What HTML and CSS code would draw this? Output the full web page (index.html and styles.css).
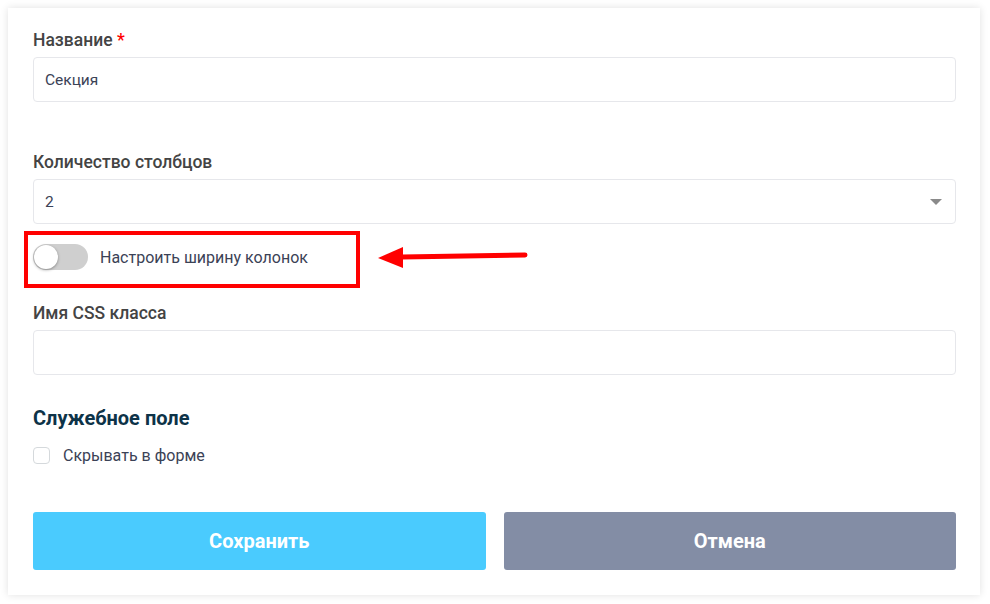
FILE: index.html
```html
<!DOCTYPE html>
<html lang="ru">
<head>
    <meta charset="UTF-8">
    <title>Секция</title>
    <link rel="stylesheet" href="styles.css">
</head>
<body>

<div class="card">
    <form class="section-form">
        <div class="field">
            <label class="field-label" for="name">Название <span class="required">*</span></label>
            <input class="field-input" type="text" id="name" value="Секция">
        </div>

        <div class="field field-spaced">
            <label class="field-label" for="cols">Количество столбцов</label>
            <div class="select-wrap">
                <div class="field-input select-input" id="cols">2</div>
                <span class="caret"></span>
            </div>
        </div>

        <div class="toggle-row">
            <span class="toggle"><span class="knob"></span></span>
            <span class="toggle-text">Настроить ширину колонок</span>
            <!-- annotation -->
            <span class="mark-box"></span>
            <svg class="mark-arrow" width="150" height="24" viewBox="0 0 150 24">
                <path d="M147 9 L24 11" stroke="#ff0000" stroke-width="5" stroke-linecap="round" fill="none"/>
                <polygon points="0,12 25,1 25,22" fill="#ff0000"/>
            </svg>
        </div>

        <div class="field field-css">
            <label class="field-label" for="css">Имя CSS класса</label>
            <input class="field-input" type="text" id="css">
        </div>

        <h3 class="group-title">Служебное поле</h3>
        <label class="check-row">
            <span class="checkbox"></span>
            <span>Скрывать в форме</span>
        </label>

        <div class="actions">
            <button type="button" class="btn btn-save">Сохранить</button>
            <button type="button" class="btn btn-cancel">Отмена</button>
        </div>
    </form>
</div>

</body>
</html>
```

FILE: styles.css
```css
* {
    margin: 0;
    padding: 0;
    box-sizing: border-box;
}

body {
    font-family: Roboto, "Liberation Sans", Arial, sans-serif;
    background: #fff;
    padding: 8px;
}

.card {
    width: 972px;
    background: #fff;
    padding: 22px 24px 25px 25px;
    box-shadow: 0 0 8px rgba(0, 0, 0, 0.12);
}

.field {
    display: flex;
    flex-direction: column;
}

.field-spaced {
    margin-top: 50px;
}

.field-css {
    margin-top: 33px;
}

.field-label {
    font-size: 17.5px;
    line-height: 20px;
    font-weight: 500;
    color: #444;
    margin-bottom: 7px;
}

.required {
    color: #f00;
}

.field-input {
    width: 100%;
    height: 45px;
    border: 1px solid #e6e7eb;
    border-radius: 4px;
    padding: 0 11px;
    font-family: inherit;
    font-size: 15.5px;
    color: #3b4256;
    outline: none;
}

.select-wrap {
    position: relative;
}

.select-input {
    display: flex;
    align-items: center;
}

.caret {
    position: absolute;
    right: 14px;
    top: 20px;
    border-left: 6px solid transparent;
    border-right: 6px solid transparent;
    border-top: 6px solid #8a8a8a;
}

/* toggle */
.toggle-row {
    position: relative;
    display: flex;
    align-items: center;
    gap: 12px;
    height: 26px;
    margin-top: 20px;
}

.toggle {
    position: relative;
    width: 55px;
    height: 26px;
    border-radius: 13px;
    background: #cfcfcf;
}

.knob {
    position: absolute;
    left: 1px;
    top: 1px;
    width: 24px;
    height: 24px;
    border-radius: 50%;
    background: #fff;
    box-shadow: 0 1px 3px rgba(0, 0, 0, 0.35);
}

.toggle-text {
    font-size: 16px;
    color: #3b4256;
}

.mark-box {
    position: absolute;
    left: -9px;
    top: -13px;
    width: 336px;
    height: 57px;
    border: 4px solid #ff0000;
}

.mark-arrow {
    position: absolute;
    left: 345px;
    top: 2px;
}

.group-title {
    margin-top: 32px;
    font-size: 20px;
    line-height: 23px;
    font-weight: 700;
    color: #0d3348;
}

.check-row {
    display: flex;
    align-items: center;
    gap: 13px;
    height: 19px;
    margin-top: 16px;
    font-size: 16px;
    color: #3b4256;
}

.checkbox {
    width: 17px;
    height: 17px;
    border: 1px solid #d5d9dc;
    border-radius: 4px;
}

.actions {
    display: flex;
    gap: 18px;
    margin-top: 47px;
}

.btn {
    flex: 1;
    height: 58px;
    border: none;
    border-radius: 3px;
    color: #fff;
    font-family: inherit;
    font-size: 20px;
    font-weight: 700;
    cursor: pointer;
}

.btn-save {
    background: #4acbfe;
}

.btn-cancel {
    background: #838da5;
}
```
